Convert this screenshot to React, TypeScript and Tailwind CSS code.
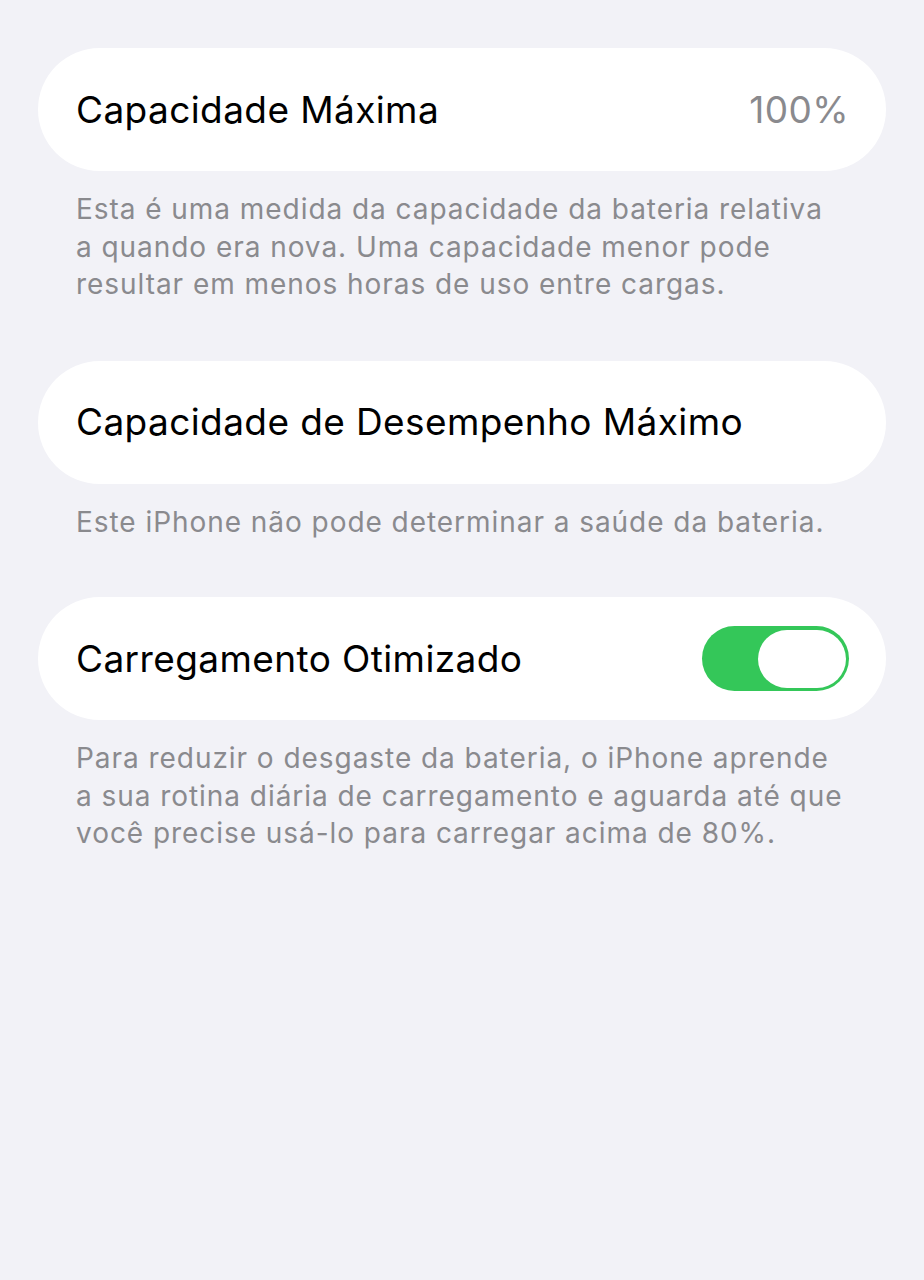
import React from "react";

const font = { fontFamily: "Inter, 'Noto Sans', sans-serif" };

function Card({ children }: { children: React.ReactNode }) {
  return (
    <div className="mx-[38px] h-[123px] rounded-[62px] bg-white flex items-center justify-between pl-[38px] pr-[37px]">
      {children}
    </div>
  );
}

function Footer({ lines }: { lines: string[] }) {
  return (
    <p className="ml-[76px] mt-[20px] text-[28px] tracking-[0.95px] leading-[37.5px] text-[#8a8a8e] whitespace-nowrap">
      {lines.map((l, i) => (
        <React.Fragment key={i}>
          {l}
          {i < lines.length - 1 && <br />}
        </React.Fragment>
      ))}
    </p>
  );
}

export default function App() {
  return (
    <div className="min-h-[1280px] w-full bg-[#f2f2f7] pt-[48px]" style={font}>
      <Card>
        <span className="text-[37px] tracking-[0.4px] text-black">Capacidade Máxima</span>
        <span className="text-[37px] tracking-[0.4px] text-[#8a8a8e]">100%</span>
      </Card>
      <Footer
        lines={[
          "Esta é uma medida da capacidade da bateria relativa",
          "a quando era nova. Uma capacidade menor pode",
          "resultar em menos horas de uso entre cargas.",
        ]}
      />

      <div className="h-[57px]" />
      <Card>
        <span className="text-[37px] tracking-[0.4px] text-black">Capacidade de Desempenho Máximo</span>
      </Card>
      <Footer lines={["Este iPhone não pode determinar a saúde da bateria."]} />

      <div className="h-[56px]" />
      <Card>
        <span className="text-[37px] tracking-[0.4px] text-black">Carregamento Otimizado</span>
        <div className="w-[147px] h-[65px] rounded-full bg-[#34c759] flex items-center justify-end pr-[3px]">
          <div className="w-[88px] h-[58px] rounded-full bg-white" />
        </div>
      </Card>
      <Footer
        lines={[
          "Para reduzir o desgaste da bateria, o iPhone aprende",
          "a sua rotina diária de carregamento e aguarda até que",
          "você precise usá-lo para carregar acima de 80%.",
        ]}
      />
    </div>
  );
}
